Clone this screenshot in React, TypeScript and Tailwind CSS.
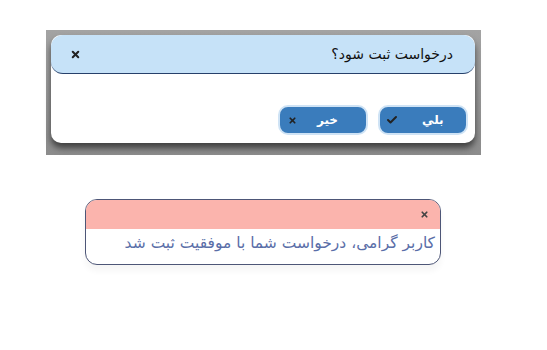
import { Check, X } from 'lucide-react';

export default function App() {
  return (
    <div className="w-[547px] h-[350px] bg-white overflow-hidden" style={{ fontFamily: '"DejaVu Sans", sans-serif' }}>
      {/* Confirm dialog over dimmed page */}
      <div className="ml-[46px] mt-[30px] w-[435px] h-[125px] p-[5px] pr-[6px] bg-gradient-to-b from-[#a3a3a3] to-[#8c8c8c]">
        <div className="w-[424px] h-[108px] bg-white rounded-[10px] shadow-[0_5px_6px_rgba(0,0,0,0.55)] flex flex-col">
          <div className="h-[39px] bg-[#c6e2f8] rounded-[12px] border-b border-[#27406a] flex items-center justify-between pl-[19px] pr-[22px]">
            <X className="w-[11px] h-[11px] text-[#222]" strokeWidth={4.5} />
            <span dir="rtl" className="text-[14px] text-[#111] leading-none">درخواست ثبت شود؟</span>
          </div>
          <div className="flex-1 flex items-end justify-end gap-[10px] pr-[7px] pb-[8px]">
            <button className="w-[90px] h-[30px] rounded-[10px] bg-[#3a7cbc] border-2 border-[#cfe3f5] flex items-center pl-[8px]">
              <X className="w-[9px] h-[9px] text-[#222]" strokeWidth={4.5} />
              <span dir="rtl" className="ml-[20px] text-[12px] font-bold text-white">خیر</span>
            </button>
            <button className="w-[90px] h-[30px] rounded-[10px] bg-[#3a7cbc] border-2 border-[#cfe3f5] flex items-center pl-[6px]">
              <Check className="w-[12px] h-[12px] text-[#222]" strokeWidth={4} />
              <span dir="rtl" className="ml-[24px] text-[12px] font-bold text-white">بلي</span>
            </button>
          </div>
        </div>
      </div>

      {/* Success alert */}
      <div className="ml-[85px] mt-[44px] w-[356px] h-[66px] rounded-[12px] border border-[#4d5677] overflow-hidden bg-white shadow-[0_6px_6px_rgba(0,0,0,0.04)]">
        <div className="h-[29px] bg-[#fbb4ad] flex items-center justify-end pr-[11px]">
          <X className="w-[9px] h-[9px] text-[#444]" strokeWidth={4.5} />
        </div>
        <div dir="rtl" className="pr-[5px] pt-[3px] text-[15.5px] text-[#5a6ea8]">
          کاربر گرامی، درخواست شما با موفقیت ثبت شد
        </div>
      </div>
    </div>
  );
}
